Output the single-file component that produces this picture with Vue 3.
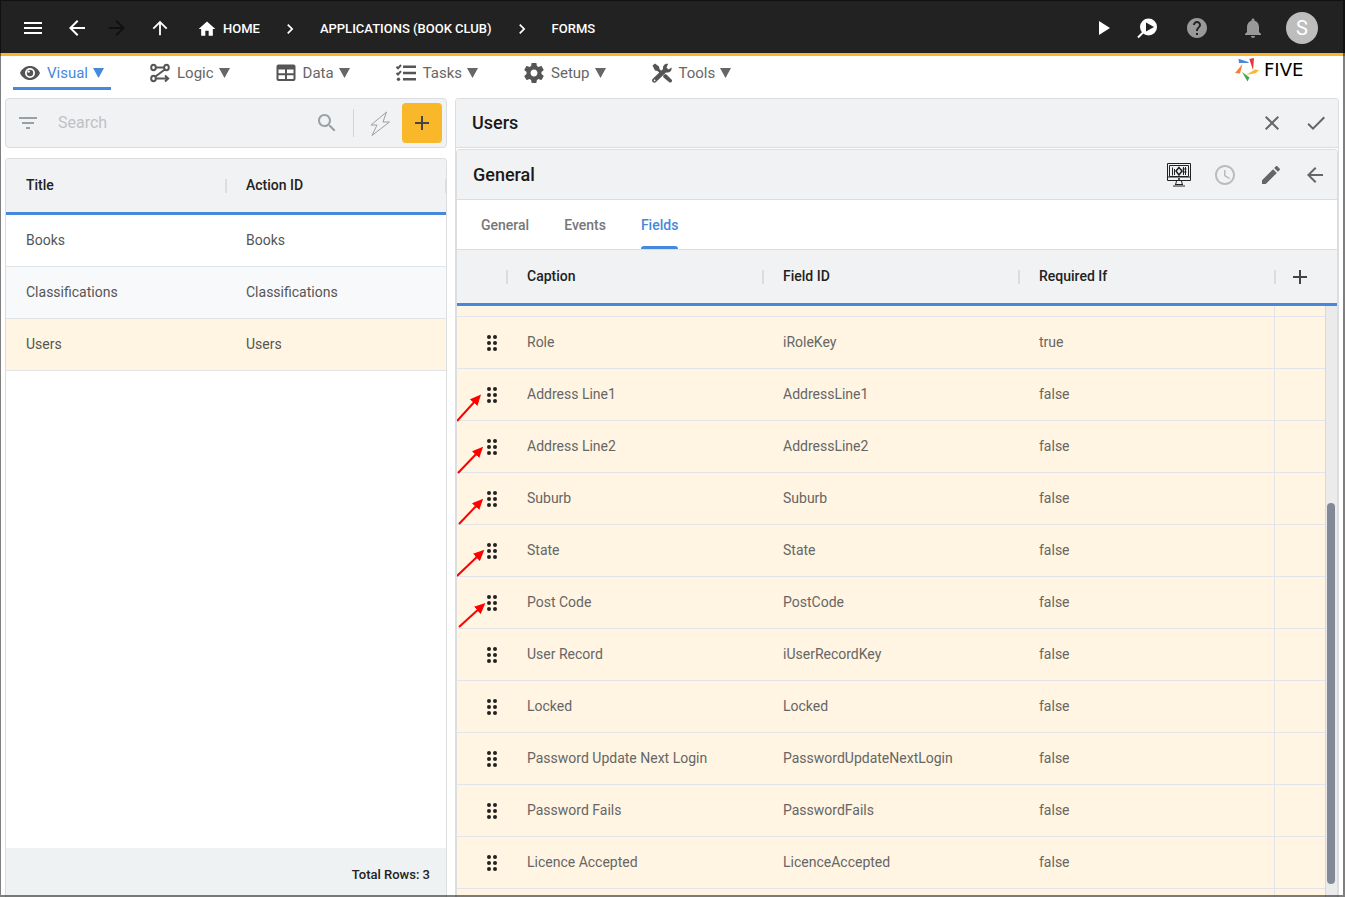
<script setup>
const back = 'M20 11H7.83l5.59-5.59L12 4l-8 8 8 8 1.41-1.41L7.83 13H20v-2z'
const add = 'M19 13h-6v6h-2v-6H5v-2h6V5h2v6h6v2z'
const chevron = 'M10 6 8.59 7.41 13.17 12l-4.58 4.59L10 18l6-6z'

const menus = [
  { name: 'Visual', icon: 'eye', active: true },
  { name: 'Logic', icon: 'logic' },
  { name: 'Data', icon: 'data' },
  { name: 'Tasks', icon: 'tasks' },
  { name: 'Setup', icon: 'setup' },
  { name: 'Tools', icon: 'tools' },
]
const forms = [
  { title: 'Books', action: 'Books' },
  { title: 'Classifications', action: 'Classifications' },
  { title: 'Users', action: 'Users', selected: true },
]
const tabs = ['General', 'Events', 'Fields']
const fields = [
  { caption: 'Role', id: 'iRoleKey', required: 'true' },
  { caption: 'Address Line1', id: 'AddressLine1', required: 'false', arrow: [0, 52, 20, 30] },
  { caption: 'Address Line2', id: 'AddressLine2', required: 'false', arrow: [1, 52, 22, 30] },
  { caption: 'Suburb', id: 'Suburb', required: 'false', arrow: [2, 51, 22, 30] },
  { caption: 'State', id: 'State', required: 'false', arrow: [0, 51, 23, 29] },
  { caption: 'Post Code', id: 'PostCode', required: 'false', arrow: [2, 50, 24, 30] },
  { caption: 'User Record', id: 'iUserRecordKey', required: 'false' },
  { caption: 'Locked', id: 'Locked', required: 'false' },
  { caption: 'Password Update Next Login', id: 'PasswordUpdateNextLogin', required: 'false' },
  { caption: 'Password Fails', id: 'PasswordFails', required: 'false' },
  { caption: 'Licence Accepted', id: 'LicenceAccepted', required: 'false' },
]
</script>

<template>
  <div class="app">
    <header class="topbar">
      <button class="ib" aria-label="Menu"><svg viewBox="0 0 24 24"><path d="M3 18h18v-2H3v2zm0-5h18v-2H3v2zm0-7v2h18V6H3z" /></svg></button>
      <button class="ib back" aria-label="Back"><svg viewBox="0 0 24 24"><path :d="back" /></svg></button>
      <button class="ib forward" aria-label="Forward" disabled><svg viewBox="0 0 24 24"><path d="m12 4-1.41 1.41L16.17 11H4v2h12.17l-5.58 5.59L12 20l8-8z" /></svg></button>
      <button class="ib up" aria-label="Up"><svg viewBox="0 0 24 24"><path d="m4 12 1.41 1.41L11 7.83V20h2V7.83l5.58 5.59L20 12l-8-8-8 8z" /></svg></button>
      <nav class="crumbs" aria-label="Breadcrumb">
        <a href="#"><svg class="home" viewBox="0 0 24 24"><path d="M10 20v-6h4v6h5v-8h3L12 3 2 12h3v8z" /></svg>HOME</a>
        <svg class="chev" viewBox="0 0 24 24"><path :d="chevron" /></svg>
        <a href="#">APPLICATIONS (BOOK CLUB)</a>
        <svg class="chev" viewBox="0 0 24 24"><path :d="chevron" /></svg>
        <a href="#">FORMS</a>
      </nav>
      <div class="actions">
        <button class="ib" aria-label="Run"><svg viewBox="0 0 24 24"><path d="M8 5v14l11-7z" /></svg></button>
        <button class="ib" aria-label="Inspect"><svg viewBox="0 0 24 24"><circle cx="13.500" cy="11" r="8.500" /><path class="dark" d="M11 6.500v9l8-4.500z" /><path class="stroke" d="m8 16.500-5 5" /></svg></button>
        <button class="ib dim help" aria-label="Help"><svg viewBox="0 0 24 24"><path d="M12 2C6.480 2 2 6.480 2 12s4.480 10 10 10 10-4.480 10-10S17.520 2 12 2zm1 17h-2v-2h2v2zm2.070-7.750-.9.920C13.450 12.900 13 13.500 13 15h-2v-.5c0-1.100.45-2.100 1.170-2.830l1.240-1.260c.37-.36.59-.86.59-1.410 0-1.100-.9-2-2-2s-2 .9-2 2H8c0-2.210 1.790-4 4-4s4 1.790 4 4c0 .88-.36 1.680-.93 2.250z" /></svg></button>
        <button class="ib dim bell" aria-label="Notifications"><svg viewBox="0 0 24 24"><path d="M12 22c1.100 0 2-.9 2-2h-4c0 1.100.890 2 2 2zm6-6v-5c0-3.070-1.640-5.640-4.500-6.320V4c0-.83-.67-1.500-1.500-1.500s-1.500.67-1.500 1.500v.68C7.630 5.360 6 7.920 6 11v5l-2 2v1h16v-1l-2-2z" /></svg></button>
        <button class="avatar">S</button>
      </div>
    </header>

    <div class="menubar">
      <nav class="menus">
        <button v-for="m in menus" :key="m.name" class="menu" :class="{ active: m.active }">
          <svg v-if="m.icon === 'eye'" viewBox="0 0 22 22"><path fill-rule="evenodd" d="M11 4C6.500 4 2.800 6.700 1 11c1.800 4.300 5.500 7 10 7s8.200-2.700 10-7c-1.800-4.300-5.500-7-10-7zm0 12a5 5 0 1 1 0-10 5 5 0 0 1 0 10z" /><circle cx="11" cy="11" r="3.200" /><circle class="hole" cx="9.600" cy="9.600" r="1.200" /></svg>
          <svg v-else-if="m.icon === 'logic'" class="line" viewBox="0 0 22 22"><ellipse cx="4.500" cy="5.500" rx="2.300" ry="2.800" /><ellipse cx="17.500" cy="5.500" rx="2.300" ry="2.800" /><ellipse cx="4.500" cy="16.500" rx="2.300" ry="2.800" /><path d="M7 5.500h8M15.800 7.500 6.500 14.500M7 16.500h12M16 13.500l3.200 3-3.200 3" /></svg>
          <svg v-else-if="m.icon === 'data'" viewBox="0 0 22 22"><path fill-rule="evenodd" d="M3.500 2.500h15a2 2 0 0 1 2 2v12.500a2 2 0 0 1-2 2h-15a2 2 0 0 1-2-2V4.500a2 2 0 0 1 2-2zm0 5v3.800h6.500V7.500zm8.500 0v3.800h6.500V7.500zm-8.500 5.700V17h6.500v-3.800zm8.500 0V17h6.500v-3.800z" /></svg>
          <svg v-else-if="m.icon === 'tasks'" viewBox="0 0 22 22"><path d="M8 3.500h13v2.500H8zM8 9.800h13v2.500H8zM8 16h13v2.500H8z" /><circle cx="3.500" cy="17.200" r="1.700" /><path class="stroke" d="m1.500 4.800 1.500 1.500L6 3M1.500 11l1.500 1.500 3-3.300" /></svg>
          <svg v-else-if="m.icon === 'setup'" viewBox="1 1 22 22"><path d="M19.430 12.980c.04-.32.07-.64.07-.98s-.03-.66-.07-.98l2.110-1.650c.19-.15.24-.42.12-.64l-2-3.460c-.12-.22-.39-.3-.61-.22l-2.490 1c-.52-.4-1.080-.73-1.690-.98l-.38-2.650C14.460 2.180 14.250 2 14 2h-4c-.25 0-.46.18-.49.42l-.38 2.650c-.61.25-1.170.59-1.690.98l-2.490-1c-.23-.09-.49 0-.61.22l-2 3.460c-.13.22-.07.49.12.64l2.110 1.650c-.04.32-.07.65-.07.98s.03.66.07.98l-2.110 1.650c-.19.15-.24.42-.12.64l2 3.460c.12.22.39.3.61.22l2.490-1c.52.4 1.080.73 1.690.98l.38 2.650c.03.24.24.42.49.42h4c.25 0 .46-.18.49-.42l.38-2.650c.61-.25 1.170-.59 1.690-.98l2.490 1c.23.09.49 0 .61-.22l2-3.460c.12-.22.07-.49-.12-.64l-2.110-1.650zM12 15.500c-1.930 0-3.500-1.570-3.500-3.500s1.570-3.500 3.500-3.500 3.500 1.570 3.500 3.500-1.570 3.500-3.500 3.500z" /></svg>
          <svg v-else viewBox="0 0 22 22"><path d="M1.500 3.500 4 1.500l4 3 .5 2.500 3 3-2 2-3-3L4 8.500z" /><path d="m12 14 2-2 1.500.5 5 5c.7.8.7 1.700 0 2.500s-1.800.8-2.500 0l-5.500-4.500z" /><path d="M20.500 5.500 17.500 7.500 15.500 5.500 17.200 1.800C14 1.200 11.500 3.500 12 7L1.800 16.800c-1 1-1 2.300-.1 3.200.9 1 2.400 1 3.300 0L15 10.500c3.300.6 6.300-1.600 5.500-5z" /><circle class="hole" cx="3.600" cy="18.300" r=".9" /></svg>
          <span>{{ m.name }}</span>
          <svg class="tri" viewBox="0 0 11 10"><path d="M0 0h11L5.500 10z" /></svg>
        </button>
      </nav>
      <div class="logo">
        <svg viewBox="0 0 24 24"><path fill="#4688dc" d="M3.500.7 14 4.200 13 5H4z" /><path fill="#e5343d" d="M14.300 1 19 0l-1 12z" /><path fill="#fab72c" d="m24 12-3 3-10 2 9-5.500z" /><path fill="#3fa757" d="m7 14 7.500 5.500-2 4z" /><path fill="#fa8030" d="M7.500 6 5 15.500 0 15z" /></svg>
        <span>FIVE</span>
      </div>
    </div>

    <main class="main">
      <section class="left">
        <div class="search">
          <svg class="filter" viewBox="0 0 24 24"><path d="M10 18h4v-2h-4v2zM3 6v2h18V6H3zm3 7h12v-2H6v2z" /></svg>
          <input type="text" placeholder="Search" aria-label="Search" />
          <svg class="lens" viewBox="0 0 24 24"><path d="M15.500 14h-.79l-.28-.27C15.410 12.590 16 11.110 16 9.500 16 5.910 13.090 3 9.500 3S3 5.910 3 9.500 5.910 16 9.500 16c1.610 0 3.090-.59 4.230-1.570l.27.28v.79l5 4.990L20.490 19l-4.990-5zm-6 0C7.010 14 5 11.990 5 9.500S7.010 5 9.500 5 14 7.010 14 9.500 11.990 14 9.500 14z" /></svg>
          <i class="divider"></i>
          <button class="bolt" aria-label="Quick actions"><svg viewBox="0 0 24 26"><path d="M18.500 2 3 15h6L4 25.500 21.500 12H15z" /></svg></button>
          <button class="add" aria-label="Add"><svg viewBox="0 0 24 24"><path :d="add" /></svg></button>
        </div>
        <div class="list">
          <table>
            <thead><tr><th>Title</th><th>Action ID</th></tr></thead>
            <tbody>
              <tr v-for="f in forms" :key="f.title" :class="{ selected: f.selected }"><td>{{ f.title }}</td><td>{{ f.action }}</td></tr>
            </tbody>
          </table>
          <footer>Total Rows: 3</footer>
        </div>
      </section>

      <section class="right">
        <div class="bar">
          <h1>Users</h1>
          <button class="ib" aria-label="Close"><svg viewBox="0 0 24 24"><path d="M19 6.410 17.590 5 12 10.590 6.410 5 5 6.410 10.590 12 5 17.590 6.410 19 12 13.410 17.590 19 19 17.590 13.410 12z" /></svg></button>
          <button class="ib" aria-label="Save"><svg viewBox="0 0 24 24"><path d="M9 16.170 4.830 12l-1.420 1.410L9 19 21 7l-1.410-1.410z" /></svg></button>
        </div>
        <div class="inner">
          <div class="bar">
            <h2>General</h2>
            <button class="ib" aria-label="Preview"><svg class="monitor" viewBox="0 0 24 24"><path d="M.5.5h23v17H.5zM2.500 2.500h19v11h-19zM.5 14h23M9.500 18l-1 4M14.500 18l1 4M6 23h12M8 21.500h8M5.500 4.500v8M7.500 6v6M16.500 4v8M18.500 4v8M15.500 6h4M15.500 9h4" /><path d="M12 4.500 15 8l-3 4-3-4z" stroke-width="1.500" /><circle cx="12" cy="16" r=".7" /></svg></button>
            <button class="ib pale" aria-label="History"><svg viewBox="0 0 24 24"><path d="M11.990 2C6.470 2 2 6.480 2 12s4.470 10 9.990 10C17.520 22 22 17.520 22 12S17.520 2 11.990 2zM12 20c-4.420 0-8-3.580-8-8s3.580-8 8-8 8 3.580 8 8-3.580 8-8 8zm.5-13H11v6l5.250 3.150.75-1.230-4.500-2.670z" /></svg></button>
            <button class="ib" aria-label="Edit"><svg viewBox="0 0 24 24"><path d="M3 17.250V21h3.750L17.810 9.940l-3.750-3.750L3 17.250zM20.710 7.040c.39-.39.39-1.020 0-1.410l-2.340-2.340c-.39-.39-1.020-.39-1.410 0l-1.830 1.830 3.750 3.750 1.830-1.830z" /></svg></button>
            <button class="ib" aria-label="Return"><svg viewBox="0 0 24 24"><path :d="back" /></svg></button>
          </div>
          <div class="tabs" role="tablist">
            <button v-for="t in tabs" :key="t" role="tab" :aria-selected="t === 'Fields'" :class="{ active: t === 'Fields' }">{{ t }}</button>
          </div>
          <div class="grid">
            <table>
              <colgroup><col class="narrow" /><col /><col /><col /><col class="narrow" /></colgroup>
              <thead>
                <tr><th></th><th>Caption</th><th>Field ID</th><th>Required If</th><th><button class="plus" aria-label="Add field"><svg viewBox="0 0 24 24"><path :d="add" /></svg></button></th></tr>
              </thead>
              <tbody>
                <tr class="cut"><td></td><td></td><td></td><td></td><td></td></tr>
                <tr v-for="f in fields" :key="f.id">
                  <td>
                    <svg class="grip" viewBox="0 0 10 16"><circle v-for="n in 6" :key="n" :cx="n % 2 ? 2 : 8" :cy="Math.ceil(n / 2) * 6 - 4" r="2" /></svg>
                    <svg v-if="f.arrow" class="arrow" viewBox="0 0 50 52">
                      <defs><marker :id="'tip-' + f.id" viewBox="0 0 11 10" refX="5" refY="5" markerWidth="11" markerHeight="10" markerUnits="userSpaceOnUse" orient="auto"><path d="M0 0 11 5 0 10z" fill="#f00" /></marker></defs>
                      <line :x1="f.arrow[0]" :y1="f.arrow[1]" :x2="f.arrow[2]" :y2="f.arrow[3]" :marker-end="'url(#tip-' + f.id + ')'" />
                    </svg>
                  </td>
                  <td>{{ f.caption }}</td><td>{{ f.id }}</td><td>{{ f.required }}</td><td></td>
                </tr>
                <tr><td></td><td></td><td></td><td></td><td></td></tr>
              </tbody>
            </table>
            <div class="scroll"><div class="track"><div class="thumb"></div></div></div>
          </div>
        </div>
      </section>
    </main>
  </div>
</template>

<style>
body { margin: 0; background: #fff; }
</style>

<style scoped>
* { box-sizing: border-box; }
.app { position: relative; height: 100vh; overflow: hidden; display: flex; flex-direction: column; font: 14px/20px Roboto, "Liberation Sans", sans-serif; color: #555; }
.app::after { content: ""; position: absolute; inset: 0; border: solid rgba(0, 0, 0, .5); border-width: 1px 2px 2px 1px; pointer-events: none; }
button { font: inherit; color: inherit; background: none; border: 0; padding: 0; margin: 0; display: flex; align-items: center; }
svg { display: block; fill: currentColor; flex: none; }
.stroke { fill: none; stroke: currentColor; stroke-width: 2; }
.ib svg { width: 24px; height: 24px; }

.topbar { height: 56px; flex: none; background: #222; border-bottom: 3px solid #fab72c; color: #fff; display: flex; align-items: center; padding: 3px 27px 0 21px; }
.back { margin-left: 20px; }
.forward { margin-left: 16px; color: #111; }
.up { margin-left: 20px; }
.up svg { width: 22px; height: 22px; }
.crumbs { display: flex; align-items: center; margin-left: 26px; padding-top: 1px; font-size: 13px; font-weight: 500; }
.crumbs a { display: flex; align-items: center; gap: 6px; color: #fff; text-decoration: none; }
.home { width: 20px; height: 20px; }
.chev { width: 20px; height: 20px; margin: 0 20px; }
.actions { margin-left: auto; display: flex; align-items: center; gap: 20px; }
.help { margin-left: 6px; }
.bell { margin: 0 1px 0 12px; }
.dim { color: #999; }
.dark { fill: #222; }
.avatar { width: 32px; height: 32px; border-radius: 50%; background: #bdbdbd; justify-content: center; font-size: 20px; }

.menubar { height: 34px; flex: none; display: flex; justify-content: space-between; padding: 0 22px 0 13px; }
.menus { display: flex; gap: 32px; }
.menu { border-bottom: 3px solid transparent; padding: 3px 7px 0 6px; color: #666; font-size: 15px; }
.menu svg { width: 22px; height: 22px; margin-right: 6px; color: #555; }
.menu .tri { width: 11px; height: 10px; margin: 0 0 0 5px; color: inherit; }
.menu.active { color: #4688dc; border-color: #4688dc; border-radius: 2px 2px 0 0; }
.line { fill: none; stroke: currentColor; stroke-width: 2; }
.hole { fill: #fff; }
.logo { width: 89px; display: flex; align-items: center; gap: 5px; height: 28px; margin-right: -1px; color: #000; font: 18px/20px "DejaVu Sans", sans-serif; }
.logo svg { width: 24px; height: 24px; }

.main { flex: 1; min-height: 0; display: grid; grid-template-columns: 1fr 2fr; grid-template-rows: 100%; gap: 8px; padding: 8px 6px 0 5px; }
.left { display: flex; flex-direction: column; gap: 10px; min-width: 0; }
.search { height: 50px; flex: none; display: flex; align-items: center; background: #f1f2f4; border: 1px solid #dcdddf; border-radius: 4px; padding: 0 4px 0 10px; color: #9aa0a6; }
.filter { width: 24px; height: 24px; }
.search input { flex: 1; min-width: 0; border: 0; padding: 0; margin-left: 18px; outline: 0; background: none; font: 16px/20px Roboto, sans-serif; color: #333; }
.search input::placeholder { color: #bfc2c4; opacity: 1; }
.lens { width: 24px; height: 24px; }
.divider { width: 1px; height: 28px; background: #d3d5d7; margin: 0 14px; }
.bolt svg { width: 24px; height: 26px; fill: none; stroke: #9aa0a6; stroke-width: 1; }
.add { width: 40px; height: 40px; margin-left: 10px; border-radius: 4px; background: #f8b829; color: #444; justify-content: center; }
.add svg, .plus svg { width: 24px; height: 24px; }

table { width: 100%; table-layout: fixed; border-collapse: separate; border-spacing: 0; }
th, td { height: 52px; padding: 0 20px 2px; text-align: left; border-bottom: 1px solid #e1e4e8; }
th { position: relative; height: 56px; font-weight: 500; color: #222; background: #f1f2f4; border-bottom: 3px solid #4688dc; }
th:not(:last-child)::after, .list th::after { content: ""; position: absolute; right: -1px; top: 20px; width: 2px; height: 14px; background: #dcdddf; z-index: 1; }
.list { flex: 1; min-height: 0; display: flex; flex-direction: column; justify-content: space-between; border: 1px solid #dcdddf; border-bottom: 0; border-radius: 4px 4px 0 0; overflow: hidden; }
.list tr:nth-child(even) td { background: #f8f9fb; }
.list .selected td { background: #fff5e2; }
.list footer { height: 49px; padding: 17px 16px 0; background: #eff2f3; text-align: right; font-size: 13px; font-weight: 500; color: #222; }

.right { min-width: 0; border: 1px solid #dcdddf; border-bottom: 0; border-radius: 4px 4px 0 0; display: flex; flex-direction: column; overflow: hidden; }
.bar { height: 49px; flex: none; display: flex; align-items: center; gap: 20px; padding: 0 10px 0 16px; background: #f1f2f4; border-bottom: 1px solid #dcdddf; color: #666; }
.bar h1, .bar h2 { margin: 0 auto 0 0; font-size: 18px; font-weight: 500; color: #1a1a1a; }
.inner { flex: 1; min-height: 0; margin-top: 1px; display: flex; flex-direction: column; border: 1px solid #dcdddf; border-bottom: 0; border-radius: 4px 4px 0 0; overflow: hidden; }
.inner .bar { height: 50px; }
.monitor { fill: none; stroke: #222; stroke-width: 1; }
.pale { color: #bbb; margin: 0 2px; }
.tabs { height: 50px; flex: none; display: flex; gap: 35px; padding: 0 24px; border-bottom: 1px solid #dcdddf; font-weight: 500; color: #777; }
.tabs button { position: relative; }
.tabs .active { color: #4688dc; }
.tabs .active::after { content: ""; position: absolute; left: 0; right: 0; bottom: 0; height: 3px; border-radius: 3px 3px 0 0; background: #4688dc; }
.grid { flex: 1; min-height: 0; display: flex; overflow: hidden; }
.grid table { flex: 1; min-width: 0; height: 0; }
.narrow { width: 50px; }
.grid td { position: relative; background: #fff5e2; color: #666; }
.grid td:nth-child(4) { border-right: 1px solid #e1e4e8; }
.grid td:first-child, .grid th:last-child { padding: 0; }
.grid .cut td { height: 11px; }
.plus { width: 50px; justify-content: center; color: #444; }
.grip { width: 10px; height: 16px; margin-left: 30px; color: #222; }
.arrow { position: absolute; left: 0; top: 0; width: 50px; height: 52px; overflow: visible; z-index: 1; }
.arrow line { stroke: #f00; stroke-width: 2; }
.scroll { width: 12px; flex: none; display: flex; flex-direction: column; }
.scroll::before { content: ""; height: 53px; flex: none; background: #f1f2f4; border-bottom: 3px solid #4688dc; }
.track { flex: 1; display: flex; flex-direction: column; justify-content: flex-end; align-items: flex-start; background: #ebebeb; border-left: 1px solid #d8d8d8; padding: 0 0 13px 1px; }
.thumb { width: 8px; height: 66%; border-radius: 4px; background: #828997; }
</style>
